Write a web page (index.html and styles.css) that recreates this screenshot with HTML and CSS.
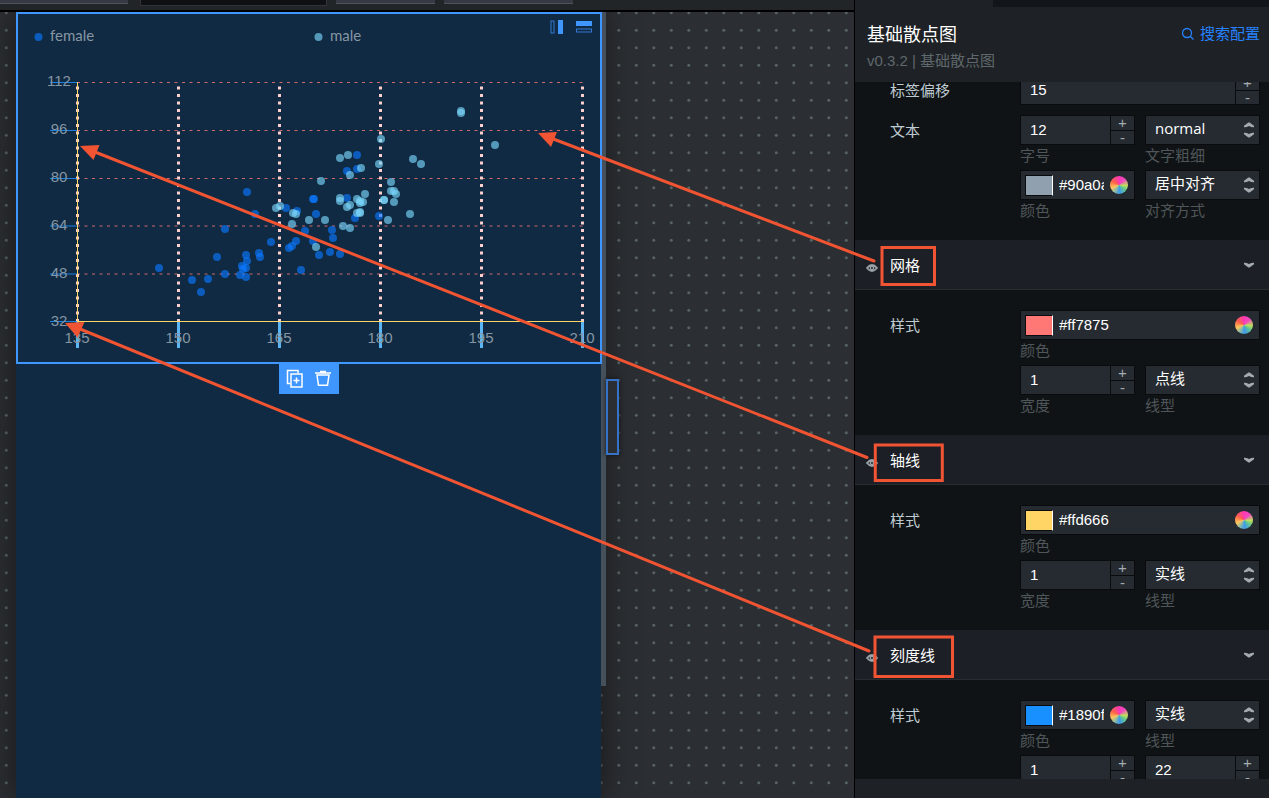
FILE: index.html
```html
<!DOCTYPE html>
<html lang="zh-CN">
<head>
<meta charset="utf-8">
<title>基础散点图</title>
<link rel="stylesheet" href="styles.css">
</head>
<body>
<svg class="defs" aria-hidden="true">
  <symbol id="arrow" viewBox="0 0 10 6"><path d="M0 .8Q2 .5 5 2Q8 .5 10 .8V2.200L5.600 5.500H4.400L0 2.200Z"/></symbol>
  <symbol id="eye" viewBox="0 0 12 8"><path d="M1 4Q6-2 11 4Q6 10 1 4Z" fill="none" stroke="currentColor" stroke-width="1.800"/><circle cx="6" cy="4" r="1.700" fill="none" stroke="currentColor" stroke-width="1.500"/></symbol>
</svg>
<main class="stage">
  <div class="toolbar">
    <span class="tool tool-first"></span><span class="tool tool-dark"></span><span class="tool tool-mid"></span><span class="tool tool-last"></span>
  </div>
  <div class="canvas">
    <svg class="dots" aria-hidden="true">
      <pattern id="dots" width="35" height="35" y="-9" patternUnits="userSpaceOnUse">
        <g fill="#566264"><circle cx="6.300" cy="9.700" r="1.500"/><circle cx="23.800" cy="9.700" r="1.500"/><circle cx="6.300" cy="27.200" r="1.500"/><circle cx="23.800" cy="27.200" r="1.500"/></g>
      </pattern>
      <rect width="100%" height="100%" fill="url(#dots)"/>
    </svg>
    <div class="artboard">
      <div class="widget">
        <svg class="chart" viewBox="18 14 582 348" role="img" aria-label="基础散点图">
          <g class="grid-h"><path d="M77 82.500H583M77 130.500H583M77 178.500H583M77 226H583M77 274H583M77 321.500H583"/></g>
          <g class="grid-v"><path d="M77.500 322V82M178.500 322V82M279.500 322V82M380.500 322V82M481.500 322V82M582.500 322V82"/></g>
          <path class="axis" d="M77.500 82V321.500H583"/>
          <g id="points"></g>
          <path class="tick-y" d="M50 82.500H77M50 130.500H77M50 178.500H77M50 226H77M50 274H77M50 321.500H77"/>
          <path class="tick-x" d="M77.500 322V348M178.500 322V348M279.500 322V348M380.500 322V348M481.500 322V348M582.500 322V348"/>
          <g class="num">
            <text x="59" y="86">112</text><text x="59" y="134">96</text><text x="59" y="182">80</text><text x="59" y="230">64</text><text x="59" y="278">48</text><text x="59" y="326">32</text>
            <text x="77" y="343">135</text><text x="178" y="343">150</text><text x="279" y="343">165</text><text x="380" y="343">180</text><text x="481" y="343">195</text><text x="582" y="343">210</text>
          </g>
          <circle class="female" cx="38.500" cy="37" r="4"/><text class="legend" x="50" y="41">female</text>
          <circle class="male" cx="318.500" cy="37" r="4"/><text class="legend" x="330" y="41">male</text>
        </svg>
        <div class="split">
          <button type="button" aria-label="左右布局"><svg width="14" height="14"><rect x="1" y="1" width="3" height="12" fill="none" stroke="#3278d2"/><rect x="8" y="0" width="5" height="14" fill="#4096ff"/></svg></button>
          <button type="button" aria-label="上下布局"><svg width="16" height="14"><rect y="1" width="16" height="5" fill="#4096ff"/><rect x=".5" y="9" width="15" height="3" fill="none" stroke="#3278d2"/></svg></button>
        </div>
        <div class="actions">
          <button type="button" aria-label="复制"><svg width="18" height="20" fill="none" stroke="#fff" stroke-width="1.500"><path d="M4 14.500H1.500V1.500H12V4"/><rect x="5" y="5" width="11" height="13"/><path d="M7.500 11.500H13.500M10.500 8.500V14.500"/></svg></button>
          <button type="button" aria-label="删除"><svg width="18" height="20" fill="none" stroke="#fff" stroke-width="1.500"><path d="M1 4H17M6 2.500H12M3 6L4.500 16.300H13.500L15 6Z"/></svg></button>
        </div>
      </div>
      <span class="scroll"></span>
      <span class="handle"></span>
    </div>
  </div>
</main>
<aside class="panel">
  <div class="tabs"><span></span></div>
  <header class="head">
    <div><h1>基础散点图</h1><p>v0.3.2 | 基础散点图</p></div>
    <button type="button" class="search"><svg width="14" height="14" fill="none" stroke="currentColor" stroke-width="1.300"><circle cx="6" cy="6" r="4.500"/><path d="M9.200 9.200L12.500 12.500"/></svg>搜索配置</button>
  </header>
  <div class="scroller">
    <div class="content">
      <section class="group first">
        <div class="row"><label for="offset">标签偏移</label>
          <div class="fields"><div class="field wide"><div class="box number"><input id="offset" value="15"><div class="step"><button type="button">+</button><button type="button">-</button></div></div></div></div>
        </div>
        <div class="row"><span class="name">文本</span>
          <div class="fields">
            <div class="field"><div class="box number"><input id="size" value="12"><div class="step"><button type="button">+</button><button type="button">-</button></div></div><label for="size">字号</label></div>
            <div class="field"><div class="box choice"><select id="weight"><option>normal</option></select><span class="arrows"><svg><use href="#arrow"/></svg><svg><use href="#arrow"/></svg></span></div><label for="weight">文字粗细</label></div>
            <div class="field"><div class="box color"><span class="swatch gray"></span><input id="c1" value="#90a0ae"><button type="button" class="wheel" aria-label="选择颜色"></button></div><label for="c1">颜色</label></div>
            <div class="field"><div class="box choice"><select id="align"><option>居中对齐</option></select><span class="arrows"><svg><use href="#arrow"/></svg><svg><use href="#arrow"/></svg></span></div><label for="align">对齐方式</label></div>
          </div>
        </div>
      </section>
      <h2><svg class="eye"><use href="#eye"/></svg><span>网格</span><svg class="chev"><use href="#arrow"/></svg></h2>
      <section class="group">
        <div class="row"><span class="name">样式</span>
          <div class="fields">
            <div class="field wide"><div class="box color"><span class="swatch red"></span><input id="c2" value="#ff7875"><button type="button" class="wheel" aria-label="选择颜色"></button></div><label for="c2">颜色</label></div>
            <div class="field"><div class="box number"><input id="w2" value="1"><div class="step"><button type="button">+</button><button type="button">-</button></div></div><label for="w2">宽度</label></div>
            <div class="field"><div class="box choice"><select id="l2"><option>点线</option></select><span class="arrows"><svg><use href="#arrow"/></svg><svg><use href="#arrow"/></svg></span></div><label for="l2">线型</label></div>
          </div>
        </div>
      </section>
      <h2><svg class="eye"><use href="#eye"/></svg><span>轴线</span><svg class="chev"><use href="#arrow"/></svg></h2>
      <section class="group">
        <div class="row"><span class="name">样式</span>
          <div class="fields">
            <div class="field wide"><div class="box color"><span class="swatch yellow"></span><input id="c3" value="#ffd666"><button type="button" class="wheel" aria-label="选择颜色"></button></div><label for="c3">颜色</label></div>
            <div class="field"><div class="box number"><input id="w3" value="1"><div class="step"><button type="button">+</button><button type="button">-</button></div></div><label for="w3">宽度</label></div>
            <div class="field"><div class="box choice"><select id="l3"><option>实线</option></select><span class="arrows"><svg><use href="#arrow"/></svg><svg><use href="#arrow"/></svg></span></div><label for="l3">线型</label></div>
          </div>
        </div>
      </section>
      <h2><svg class="eye"><use href="#eye"/></svg><span>刻度线</span><svg class="chev"><use href="#arrow"/></svg></h2>
      <section class="group">
        <div class="row"><span class="name">样式</span>
          <div class="fields">
            <div class="field"><div class="box color"><span class="swatch blue"></span><input id="c4" value="#1890ff"><button type="button" class="wheel" aria-label="选择颜色"></button></div><label for="c4">颜色</label></div>
            <div class="field"><div class="box choice"><select id="l4"><option>实线</option></select><span class="arrows"><svg><use href="#arrow"/></svg><svg><use href="#arrow"/></svg></span></div><label for="l4">线型</label></div>
            <div class="field"><div class="box number"><input aria-label="宽度" value="1"><div class="step"><button type="button">+</button><button type="button">-</button></div></div></div>
            <div class="field"><div class="box number"><input aria-label="长度" value="22"><div class="step"><button type="button">+</button><button type="button">-</button></div></div></div>
          </div>
        </div>
      </section>
    </div>
  </div>
  <footer class="foot"></footer>
</aside>
<svg class="notes" aria-hidden="true">
  <g fill="none" stroke="#f05432" stroke-width="3">
    <rect x="882" y="247.500" width="52.500" height="37"/><rect x="875.300" y="445" width="67" height="35.500"/><rect x="875" y="637" width="77.500" height="39.500"/>
    <path stroke-linecap="round" d="M874 261L552 138.500M867 457.500L95 152M869 651L80 329"/>
  </g>
  <path fill="#f05432" d="M538 133L557 132L551 147ZM80 146L99.500 145L93.500 160ZM65 323L84.500 322L77.500 337.500Z"/>
</svg>
<script src="chart.js"></script>
</body>
</html>
```
FILE: styles.css
```css
* { box-sizing: border-box; }
body { margin: 0; height: 100vh; display: flex; position: relative; overflow: hidden; background: #101315; color: #fff; font: 15px/20px "Liberation Sans", "Noto Sans CJK SC", sans-serif; }
button, input, select { font: inherit; color: inherit; border: 0; padding: 0; margin: 0; background: none; border-radius: 0; outline: 0; }
svg { display: block; }
.defs { position: absolute; width: 0; height: 0; }

.stage { flex: 1; min-width: 0; display: flex; flex-direction: column; }
.toolbar { height: 12px; flex: none; display: flex; background: #222528; border-bottom: 2px solid #000; }
.tool { height: 4px; background: #363843; border-bottom: 1px solid #50535b; }
.tool-first { width: 128px; margin-right: 12px; }
.tool-dark { width: 187px; height: 6px; margin-right: 9px; background: #0e1013; border: 1px solid #30333d; border-top: 0; }
.tool-mid { width: 99px; margin-right: 9px; }
.tool-last { width: 129px; }
.canvas { flex: 1; min-height: 0; padding-left: 16px; position: relative; overflow: hidden; background: #2b2e32; }
.dots { position: absolute; left: 0; top: 0; width: 100%; height: 100%; }
.artboard { position: relative; width: 585px; height: 100%; background: #0f2a42; box-shadow: 0 0 30px rgba(0, 0, 0, .5); }
.widget { position: relative; width: 586px; border: 2px solid #4096ff; z-index: 1; }
.chart { width: 100%; }
.grid-h { fill: none; stroke: #ff7875; stroke-opacity: .8; stroke-dasharray: 3 4.5; }
.grid-v { fill: none; stroke: #ffcfcd; stroke-width: 3; stroke-dasharray: 3 4.5; }
.axis { fill: none; stroke: #ffd666; }
.tick-y { stroke: #1890ff; stroke-opacity: .85; }
.tick-x { stroke: #5cb6f5; stroke-width: 3; }
.female { fill: #0a78ff; fill-opacity: .65; }
.male { fill: #79d5fb; fill-opacity: .65; }
.num, .legend { fill: #8796a4; font-size: 15px; }
.num { text-anchor: middle; }
.legend { font-family: Lato, sans-serif; }
.split { position: absolute; top: 6px; right: 8px; display: flex; gap: 12px; }
.actions { position: absolute; top: 100%; left: 261px; display: flex; gap: 10px; padding: 7px 7px 5px; background: #4096ff; height: 32px; }
.scroll { position: absolute; left: 100%; top: 0; width: 5px; height: 674px; background: #46505a; }
.handle { position: absolute; left: 590px; top: 367px; width: 13px; height: 76px; border: 2px solid #3672c8; background: #2b2f33; box-shadow: 0 0 4px #111; }

.panel { width: 415px; flex: none; display: flex; flex-direction: column; border-left: 1px solid #000; background: #101315; }
.tabs { flex: none; height: 7px; background: #121519; }
.tabs span { display: block; width: 138px; height: 7px; background: #1e2125; }
.head { flex: none; height: 75px; padding: 16px 9px 0 12px; display: flex; justify-content: space-between; background: #1e2125; }
h1 { margin: 0; font-size: 18px; line-height: 24px; font-weight: 400; }
.head p { margin: 4px 0 0; color: #5f686c; }
.search { display: flex; gap: 5px; align-items: center; height: 22px; color: #2681ff; }
.scroller { flex: 1; min-height: 0; overflow: hidden; }
.content { margin-top: -7px; }
.foot { flex: none; height: 19px; background: #1e2125; }
.group { padding: 20px 9px 18px 35px; }
.first { padding-top: 0; }
.row { display: grid; grid-template-columns: 130px 1fr; }
.row + .row { margin-top: 10px; }
.row > label, .name { height: 30px; line-height: 32px; color: #bfcbd2; }
.fields { display: grid; grid-template-columns: 1fr 1fr; gap: 3px 10px; }
.field { min-width: 0; color: #fff; }
.field > label { display: block; color: #4f5659; line-height: 22px; }
.wide { grid-column: span 2; }
.box { height: 30px; display: flex; position: relative; background: #262b32; border: 1px solid #090b0d; }
.box input { flex: 1; min-width: 0; width: 0; }
.number input { padding-left: 9px; }
.step { width: 24px; border-left: 1px solid #090b0d; display: flex; flex-direction: column; color: #a4acb0; }
.step button { flex: 1; line-height: 13px; }
.step button + button { border-top: 1px solid #090b0d; }
.choice select { appearance: none; width: 100%; padding: 0 0 4px 9px; font-family: "Open Sans", "Noto Sans CJK SC", sans-serif; }
.arrows { position: absolute; right: 5px; top: 6px; display: flex; flex-direction: column; gap: 4px; pointer-events: none; fill: #a3abaf; }
.arrows svg, .chev { width: 10px; height: 6px; }
.arrows svg:first-child { transform: rotate(180deg); }
.color { padding: 0 6px 0 4px; align-items: center; gap: 6px; }
.swatch { width: 28px; height: 21px; border: 1px solid #090b0d; border-right-color: #fff; }
.gray { background: #90a0ae; }
.red { background: #ff7875; }
.yellow { background: #ffd666; }
.blue { background: #1890ff; }
.wheel { width: 18px; height: 18px; border-radius: 50%; background: conic-gradient(#ff38b5, #f04abf 45deg, #bfe05c 95deg, #65c98a 125deg, #3d9bec 175deg, #93bda0 215deg, #ffc45a 250deg, #ff6048 300deg, #ff38b5); }
h2 { margin: 0; height: 50px; padding: 0 15px 0 11px; display: flex; align-items: center; background: #1d1f26; border-bottom: 1px solid #2a2d30; font-size: 15px; line-height: 22px; font-weight: 400; }
h2 span { flex: 1; margin-left: 12px; padding-top: 2px; }
.eye { width: 12px; height: 8px; margin-top: 6px; color: #9aa3a8; }
.chev { fill: #a3abaf; }
.notes { position: absolute; left: 0; top: 0; width: 100%; height: 100%; z-index: 5; pointer-events: none; }
```
FILE: chart.js
```js
const series = {
  female: [[159,268],[192,280],[208,279],[201,292],[217,257],[225,274],[225,229],[246,255],[247,261],[242,266],[243,269],[246,268],[240,275],[246,277],[259,253],[260,257],[271,242],[289,248],[292,246],[296,241],[301,270],[255,214],[286,208],[297,211],[316,214],[305,231],[313,241],[319,255],[313,199],[314,199],[347,171],[357,169],[357,155],[347,198],[355,218],[379,216],[332,230],[333,238],[330,252],[340,254],[247,192]],
  male: [[340,158],[348,155],[361,168],[350,175],[379,164],[321,181],[413,159],[421,164],[391,182],[365,194],[340,198],[340,201],[357,199],[360,201],[363,202],[360,203],[347,207],[350,205],[357,213],[360,212],[360,213],[384,200],[384,200],[391,191],[394,191],[396,194],[394,202],[410,214],[388,220],[276,208],[280,206],[293,213],[296,214],[292,224],[309,220],[325,220],[343,226],[350,228],[316,247],[461,111],[461,113],[495,145],[381,139]]
};
const layer = document.getElementById("points");
for (const [name, points] of Object.entries(series)) {
  for (const [x, y] of points) {
    const dot = document.createElementNS("http://www.w3.org/2000/svg", "circle");
    dot.setAttribute("class", name);
    dot.setAttribute("cx", x);
    dot.setAttribute("cy", y);
    dot.setAttribute("r", 4);
    layer.append(dot);
  }
}
```
